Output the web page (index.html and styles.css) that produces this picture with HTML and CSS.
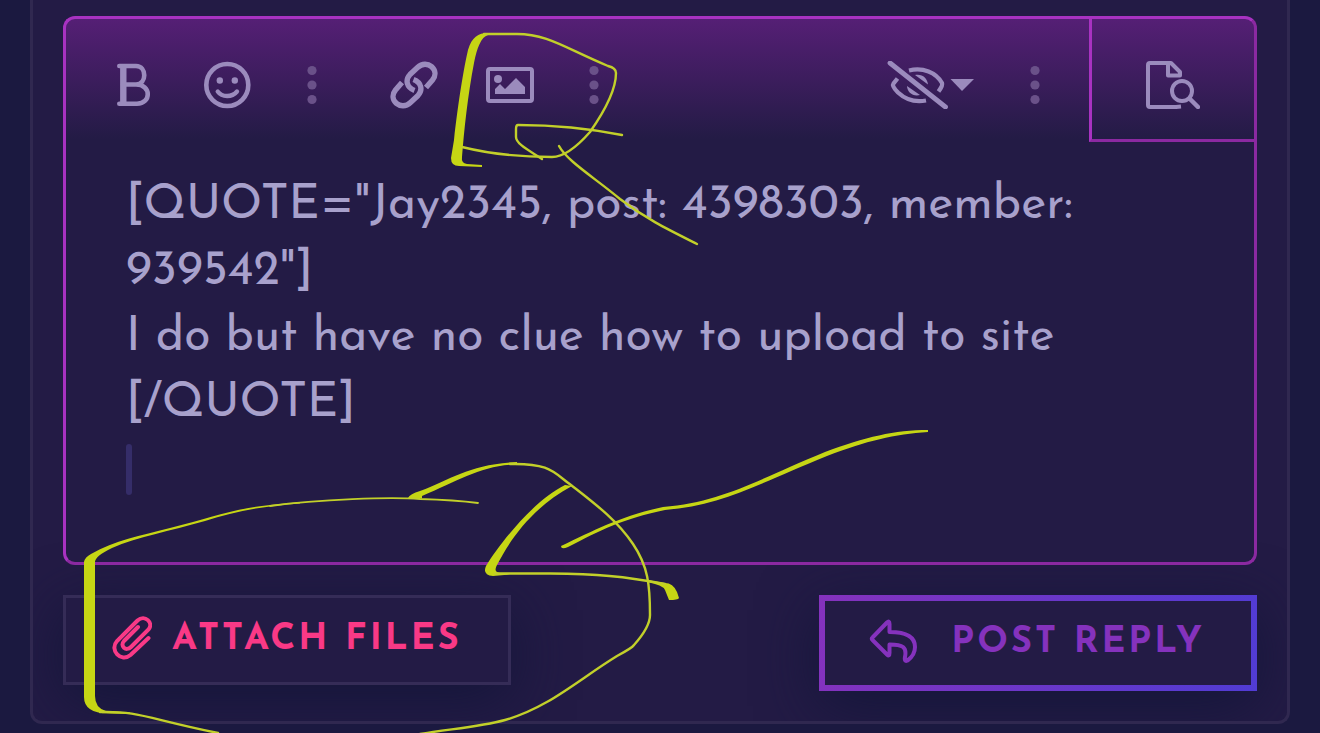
FILE: index.html
```html
<!DOCTYPE html>
<html lang="en">
<head>
<meta charset="utf-8">
<meta name="viewport" content="width=device-width, initial-scale=1">
<title>Reply editor</title>
<link rel="stylesheet" href="styles.css">
</head>
<body>
<main class="page">
  <form class="card">
    <div class="editor">
      <div class="toolbar">
        <div class="group">
          <button class="tool" type="button" aria-label="Bold">
            <svg class="icon" viewBox="0 0 48 48"><g fill="none" stroke="currentColor" stroke-width="4.600"><path d="M11.300 5H28C39 5 39 23.500 28 23.500H15M28 23.500C43.500 23.500 43.500 42.700 29 42.700H11.300" stroke-linecap="round"/><path d="M15.300 5V42.700" stroke-width="6.400"/></g></svg>
          </button>
          <button class="tool" type="button" aria-label="Smilies">
            <svg class="icon" viewBox="0 0 48 48"><circle cx="23.300" cy="24" r="21" fill="none" stroke="currentColor" stroke-width="4.600"/><circle cx="15.800" cy="19.500" r="3.200" fill="currentColor"/><circle cx="30.800" cy="19.500" r="3.200" fill="currentColor"/><path d="M13.700 30.500C18 36.500 28 36.500 33 30.500" fill="none" stroke="currentColor" stroke-width="4.300" stroke-linecap="round"/></svg>
          </button>
          <button class="more" type="button" aria-label="More text options">
            <svg class="dots" viewBox="0 0 10 40"><circle cx="5" cy="5.500" r="4.600"/><circle cx="5" cy="20" r="4.600"/><circle cx="5" cy="34.500" r="4.600"/></svg>
          </button>
        </div>
        <div class="group">
          <button class="tool" type="button" aria-label="Insert link">
            <svg class="icon" viewBox="0 0 48 48"><g fill="none" stroke="currentColor" stroke-width="5.400"><path d="M24.500 29.500C16.500 26.500 15 19 20 13.500L27.500 6.500C37 -2.500 50.500 9 42.500 19L36 26.500"/><path d="M23.500 18.500C31.500 21.500 33 29 28 34.500L20.500 41.500C11 50.500 -2.500 39 5.500 29L12 21.500"/></g></svg>
          </button>
          <button class="tool" type="button" aria-label="Insert image">
            <svg class="icon" viewBox="0 0 48 48"><rect x="2" y="8" width="44" height="32" rx="2" fill="none" stroke="currentColor" stroke-width="4"/><circle cx="12" cy="18" r="4" fill="currentColor"/><path d="M9 33V28L14 23L19 28L30 17L39 26V33Z" fill="currentColor"/></svg>
          </button>
          <button class="more" type="button" aria-label="More insert options">
            <svg class="dots" viewBox="0 0 10 40"><circle cx="5" cy="5.500" r="4.600"/><circle cx="5" cy="20" r="4.600"/><circle cx="5" cy="34.500" r="4.600"/></svg>
          </button>
        </div>
        <div class="group group-end">
          <button class="visibility" type="button" aria-label="Toggle formatting">
            <svg class="icon-wide" viewBox="0 0 88 48"><g fill="none" stroke="currentColor" stroke-width="4.300"><path d="M3 2L58.500 46" stroke-width="4.800" stroke-linecap="round"/><path d="M22 9.500C36 6 49 11.500 55 22Q56 24.500 51.500 30.500"/><path d="M10.500 17.500L6.500 22.500C5 24.500 7 27.500 11 31.500C19 39 28 41.500 39 39.500"/></g><path d="M28 14C35 12.500 40.500 17 41 23.500ZM20 25C20 31 26 36 33 34Z" fill="currentColor"/><path d="M63.500 18H87L75 30Z" fill="currentColor"/></svg>
          </button>
          <button class="more" type="button" aria-label="More options">
            <svg class="dots" viewBox="0 0 10 40"><circle cx="5" cy="5.500" r="4.600"/><circle cx="5" cy="20" r="4.600"/><circle cx="5" cy="34.500" r="4.600"/></svg>
          </button>
        </div>
        <button class="preview" type="button" aria-label="Preview">
          <svg class="icon-doc" viewBox="0 0 54 48"><g fill="none" stroke="currentColor" stroke-width="4" stroke-linejoin="round"><path d="M35 45.500L30 46H4Q2 46 2 44V4Q2 2 4 2H25L34 11V14.500H22V2"/><circle cx="36" cy="30" r="10"/><path d="M43.500 37.500L52 46" stroke-width="4.500" stroke-linecap="round"/></g></svg>
        </button>
      </div>
      <div class="writing">
        <textarea class="message" aria-label="Message" rows="5" spellcheck="false">[QUOTE="Jay2345, post: 4398303, member: 939542"]
I do but have no clue how to upload to site
[/QUOTE]
</textarea>
        <span class="caret" aria-hidden="true"></span>
      </div>
    </div>
    <div class="actions">
      <button class="attach" type="button">
        <svg class="clip" viewBox="0 0 40 44" aria-hidden="true"><path d="M26 11L12 25C7.500 30 14 36 19 31L36.500 13.500C42 7 33 -2 25.500 4.500L5 25C-3 34 9 47 18.500 39L36.500 22" fill="none" stroke="currentColor" stroke-width="4" stroke-linecap="round"/></svg>
        <span>ATTACH FILES</span>
      </button>
      <button class="post" type="submit">
        <svg class="reply" viewBox="0 0 50 44" aria-hidden="true"><path d="M3.500 18.500L18 3.500Q20.500 1 20.500 5V13C36 13 46 17.500 46 28C46 35 42 39 38.500 41.500Q35 43 36 38C38 28 34 25.500 20.500 25.500V34Q20.500 38 18 35.500L3.500 21Q2 19.800 3.500 18.500Z" fill="none" stroke="currentColor" stroke-width="4" stroke-linejoin="round"/></svg>
        <span>POST REPLY</span>
      </button>
    </div>
  </form>
  <svg class="ink" viewBox="0 0 1320 733" aria-hidden="true">
    <g class="ink-fill">
      <path d="M488 33C478 33 472 37 468 50C464 67 458 103 454 140L451 158Q451 166 459 166L482 167V165L467 164Q461 163 462 157C464 130 468 94 474 63C477 48 481 37 488 35Z"/>
      <path d="M84 562Q85 557 91 554C115 540 140 536 170 528C210 518 232 509 270 505L300 502V503.500C262 506 233 512 205 521C170 531 137 537 112 548Q95 556 95 562V696Q95 708 106 711L130 712.500V714L108 713.500Q84 713 84 697Z"/>
      <path d="M565 485C536 499 502 540 486 566Q482 575 493 576L510 574.500L500 573Q493 572 497 565C511 538 533 507 572 486Z"/>
      <path d="M647 580L665 583Q673 583 677 592L679 598Q678 600 669 600L665 590Q663 585 647 582Z"/>
      <path d="M408 498Q410 494 420 491C452 479 470 464 517 462V464.500C482 465 458 481 422 496V498.500Z"/>
      <path d="M561 546C595 530 621 516 663 507C723 502 759 479 825 452C865 437 895 430 928 430V432C895 434 866 441 827 456C760 483 724 505 665 510C622 519 601 530 568 547Q561 550 561 546Z"/>
    </g>
    <g class="ink-line">
      <path d="M484 34H517C547 34 565 48 608 66Q616 68 616 73C616 91 604 112 590 132Q568 157 552 157C526 157 494 155 462 147"/>
      <path d="M622 135C587 128 558 125 518 125Q516 125 516 129V137C516 144 530 151 542 159"/>
      <path d="M559 146C567 161 595 178 620 199C646 219 669 230 697 244"/>
      <path d="M270 506C320 499 390 497 420 499Q455 500 478 503" class="thin"/>
      <path d="M510 464C551 463 554 473 571 485C594 503 617 520 633 544C648 566 650 585 650 615Q650 627 634 645Q632 648 617 656C578 680 548 708 505 720C480 727 449 729 420 734"/>
      <path d="M495 573.500H550C596 574 624 576 665 584"/>
      <path d="M100 712C140 711 145 718 218 733"/>
    </g>
  </svg>
</main>
</body>
</html>
```

FILE: styles.css
```css
* {
  box-sizing: border-box;
}

body {
  margin: 0;
  background: #1b1940;
  color: #a8a1cc;
  font-family: "Josefin Sans", Lato, sans-serif;
}

.page {
  position: relative;
  overflow: hidden;
  padding: 0 30px 9px;
}

.card {
  margin: 0;
  padding: 16px 30px 30px;
  border: 3px solid #302850;
  border-top: 0;
  border-radius: 0 0 12px 12px;
  background: #231b45;
  overflow: hidden;
}

.editor {
  position: relative;
  border: 3px solid;
  border-color: #a832c1 #8b29a1 #8b29a1 #a832c1;
  border-radius: 12px;
  background: linear-gradient(#551f75, #231b45 120px);
}

.toolbar {
  display: flex;
  padding-left: 18px;
}

.group {
  display: flex;
  margin-right: 18px;
}

.group-end {
  margin-left: auto;
}

button {
  display: flex;
  align-items: center;
  justify-content: center;
  margin: 0;
  padding: 0;
  border: 0;
  background: none;
  color: #9b8bbd;
  font: inherit;
  cursor: pointer;
}

.tool {
  width: 96px;
  height: 132px;
}

.more {
  width: 72px;
  height: 132px;
  color: #6a5189;
}

.visibility {
  height: 132px;
  padding: 0 24px;
}

.preview {
  width: 165px;
  height: 123px;
  padding-top: 12px;
  border: 3px solid #a832c1;
  border-width: 0 0 3px 3px;
  border-bottom-color: #8b29a1;
}

.icon {
  width: 48px;
  height: 48px;
}

.icon-wide {
  width: 88px;
  height: 48px;
}

.icon-doc {
  width: 54px;
  height: 48px;
}

.dots {
  width: 10px;
  height: 40px;
  fill: currentColor;
}

.writing {
  position: relative;
  padding: 22px 60px 59px;
}

.message {
  display: block;
  width: 100%;
  height: 330px;
  margin: 0;
  padding: 0;
  border: 0;
  outline: 0;
  background: none;
  color: inherit;
  font: 400 48px/66px "Josefin Sans", Lato, sans-serif;
  resize: none;
  overflow: hidden;
}

.caret {
  position: absolute;
  left: 60px;
  top: 293px;
  width: 6px;
  height: 51px;
  border-radius: 3px;
  background: #352d69;
}

.actions {
  display: flex;
  align-items: flex-start;
  justify-content: space-between;
  padding-top: 30px;
}

.attach,
.post {
  background: #231b45;
  box-shadow: 0 15px 60px #14163a;
  font-size: 36px;
  font-weight: 700;
  letter-spacing: 3px;
  line-height: 48px;
}

.attach {
  gap: 20px;
  padding: 18px 46px;
  border: 3px solid #352c57;
  color: #f93986;
}

.post {
  gap: 32px;
  padding: 18px 46px 18px 44px;
  border: 6px solid;
  border-image: linear-gradient(100deg, #8532bd, #513cd4) 6;
  color: #8532bd;
}

.clip {
  width: 40px;
  height: 44px;
  margin-bottom: 4px;
}

.reply {
  width: 50px;
  height: 44px;
  margin-bottom: 4px;
}

.ink {
  position: absolute;
  left: 0;
  top: 0;
  width: 100%;
  pointer-events: none;
}

.ink-fill {
  fill: #c6d614;
}

.ink-line {
  fill: none;
  stroke: #c2d02a;
  stroke-width: 2.4;
  stroke-linecap: round;
}

.thin {
  stroke-width: 1.8;
}
```
